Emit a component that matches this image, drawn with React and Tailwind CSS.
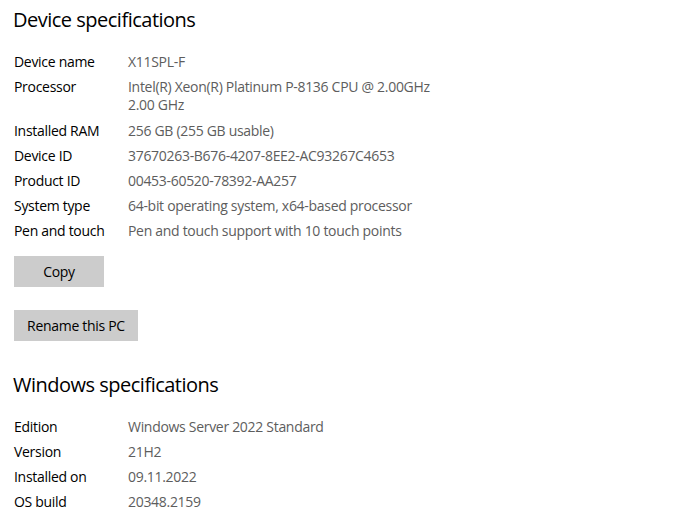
export default function App() {
  const device = [
    ["Device name", ["X11SPL-F"]],
    ["Processor", ["Intel(R) Xeon(R) Platinum P-8136 CPU @ 2.00GHz", "2.00 GHz"]],
    ["Installed RAM", ["256 GB (255 GB usable)"]],
    ["Device ID", ["37670263-B676-4207-8EE2-AC93267C4653"]],
    ["Product ID", ["00453-60520-78392-AA257"]],
    ["System type", ["64-bit operating system, x64-based processor"]],
    ["Pen and touch", ["Pen and touch support with 10 touch points"]],
  ];
  const win = [
    ["Edition", ["Windows Server 2022 Standard"]],
    ["Version", ["21H2"]],
    ["Installed on", ["09.11.2022"]],
    ["OS build", ["20348.2159"]],
  ];
  const Row = ({ label, values }) => (
    <div className={values.length > 1 ? "flex pb-[8px]" : "flex pb-[7px]"}>
      <div className="w-[114px] shrink-0 text-black">{label}</div>
      <div className="text-[#5d5d5d]">
        {values.map((v) => (
          <div key={v}>{v}</div>
        ))}
      </div>
    </div>
  );
  return (
    <div
      className="w-[684px] h-[522px] bg-white overflow-hidden pl-[14px] pt-[6px] text-[14px] leading-[18px] tracking-[-0.3px]"
      style={{ fontFamily: '"Open Sans", "Noto Sans", sans-serif' }}
    >
      <h1 className="text-[20px] leading-[28px] -ml-[1px] tracking-[-0.5px] text-black">Device specifications</h1>
      <div className="pt-[19px]">
        {device.map(([l, v]) => (
          <Row key={l} label={l} values={v} />
        ))}
      </div>
      <div className="pt-[9px] flex flex-col items-start gap-[23px]">
        <button className="w-[90px] h-[31px] bg-[#cccccc] text-black">Copy</button>
        <button className="w-[124px] h-[31px] bg-[#cccccc] text-black">Rename this PC</button>
      </div>
      <h1 className="text-[20px] leading-[28px] pt-[30px] -ml-[1px] tracking-[-0.5px] text-black">Windows specifications</h1>
      <div className="pt-[19px]">
        {win.map(([l, v]) => (
          <Row key={l} label={l} values={v} />
        ))}
      </div>
    </div>
  );
}
